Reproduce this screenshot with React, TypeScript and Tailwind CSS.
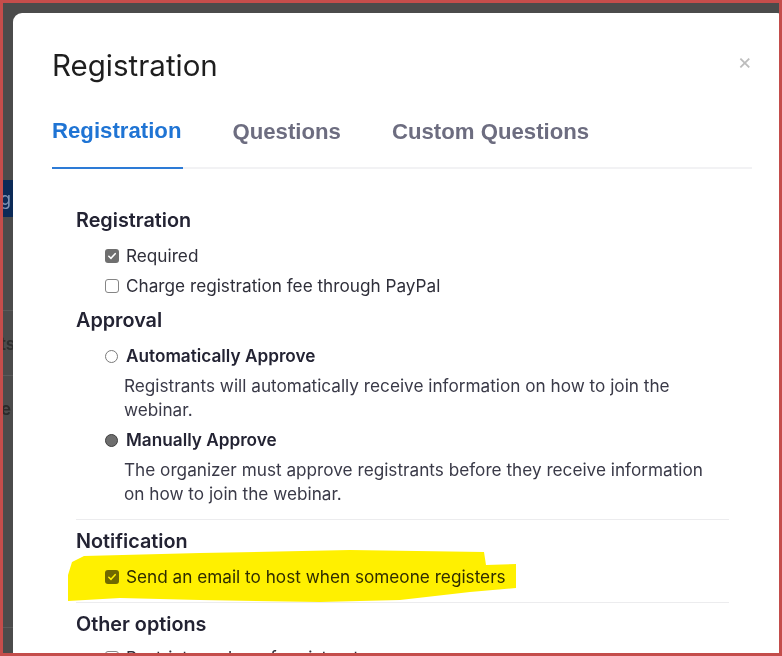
import React from 'react'

const font = { fontFamily: 'Inter, "Liberation Sans", sans-serif' }

const Checkbox = ({ checked }: { checked?: boolean }) =>
  checked ? (
    <span className="flex h-[14px] w-[14px] shrink-0 items-center justify-center rounded-[3px] bg-[#6f6f6f]">
      <svg viewBox="0 0 12 12" className="h-[10px] w-[10px]">
        <path d="M2.2 6.3 4.8 8.8 9.8 3.2" fill="none" stroke="#fff" strokeWidth="1.9" strokeLinecap="round" strokeLinejoin="round" />
      </svg>
    </span>
  ) : (
    <span className="h-[14px] w-[14px] shrink-0 rounded-[3px] border border-[#858585] bg-white" />
  )

const Radio = ({ checked }: { checked?: boolean }) =>
  checked ? (
    <span className="h-[13px] w-[13px] shrink-0 rounded-full border-[1.5px] border-[#3e3e3e] bg-[#6e6e6e]" />
  ) : (
    <span className="h-[13px] w-[13px] shrink-0 rounded-full border border-[#7a7a7a] bg-white" />
  )

const CheckRow = ({ checked, label }: { checked?: boolean; label: string }) => (
  <div className="flex h-[30px] items-center gap-[7px] pl-[29px] text-[17.2px] text-[#2f2f3a]">
    <Checkbox checked={checked} />
    <span>{label}</span>
  </div>
)

const RadioRow = ({ checked, label }: { checked?: boolean; label: string }) => (
  <div className="flex h-[34px] items-center gap-[8px] pl-[29px] text-[17.2px] font-semibold text-[#232333]">
    <Radio checked={checked} />
    <span>{label}</span>
  </div>
)

const SectionTitle = ({ children }: { children: React.ReactNode }) => (
  <div className="flex h-[36px] items-center text-[19.8px] font-semibold text-[#232333]">{children}</div>
)

export default function App() {
  return (
    <div className="relative h-[656px] w-[782px] overflow-hidden bg-[#4b4b4b]" style={font}>
      {/* page behind the overlay */}
      <div className="absolute left-0 top-[180px] flex h-[37px] w-[14px] items-center bg-[#0c2a57] text-[18px] text-[#7f93b5]">g</div>
      <div className="absolute left-0 top-[310px] h-px w-[14px] bg-[#5a5a5a]" />
      <div className="absolute left-0 top-[332px] text-[17px] font-semibold text-[#2e2e2e]">ts</div>
      <div className="absolute left-0 top-[375px] h-px w-[14px] bg-[#5a5a5a]" />
      <div className="absolute left-[1px] top-[397px] text-[17px] font-semibold text-[#2a2a2a]">e</div>
      <div className="absolute left-0 top-[627px] h-px w-[14px] bg-[#5a5a5a]" />

      {/* modal */}
      <div className="absolute left-[13px] top-[13px] h-[700px] w-[768px] rounded-tl-[9px] rounded-tr-[4px] bg-white">
        <div className="flex items-start justify-between pl-[39px] pr-[29px] pt-[33px]">
          <h1 className="text-[29.5px] leading-[38px] text-[#1e1e1e]">Registration</h1>
          <span className="text-[22px] leading-[30px] text-[#bdbdbd]">×</span>
        </div>

        <div className="ml-[39px] mt-[30px] flex w-[700px] border-b-2 border-[#f2f2f4]" style={{ fontFamily: '"Liberation Sans", Arial, sans-serif' }}>
          <div className="-mb-[2px] border-b-2 border-[#2d7bd6] pb-[20px] pr-[2px] text-[22.2px] font-bold text-[#1f74d4]">Registration</div>
          <div className="ml-[49px] pt-px text-[22.2px] font-bold text-[#6d6d80]">Questions</div>
          <div className="ml-[51px] pt-px text-[22.2px] font-bold text-[#6d6d80]">Custom Questions</div>
        </div>

        <div className="ml-[63px] mt-[34px] w-[653px]">
          <SectionTitle>Registration</SectionTitle>
          <div className="mt-[2px]">
            <CheckRow checked label="Required" />
            <CheckRow label="Charge registration fee through PayPal" />
          </div>
          <div className="mt-[2px]">
            <SectionTitle>Approval</SectionTitle>
          </div>

          <RadioRow label="Automatically Approve" />
          <p className="mt-px pl-[48px] pr-[8px] text-[17.2px] leading-[24px] text-[#3a3a48]">
            Registrants will automatically receive information on how to join the webinar.
          </p>
          <div className="mt-px">
            <RadioRow checked label="Manually Approve" />
          </div>
          <p className="mt-px pl-[48px] pr-[8px] text-[17.2px] leading-[24px] text-[#3a3a48]">
            The organizer must approve registrants before they receive information on how to join the webinar.
          </p>

          <div className="mt-[13px] h-px bg-[#ececee]" />
          <div className="mt-[4px]">
            <SectionTitle>Notification</SectionTitle>
          </div>
          <div className="mt-[2px]">
            <CheckRow checked label="Send an email to host when someone registers" />
          </div>
          <div className="mt-[10px] h-px bg-[#ececee]" />
          <div className="mt-[4px]">
            <SectionTitle>Other options</SectionTitle>
          </div>
          <CheckRow label="Restrict number of registrants" />
        </div>
      </div>

      {/* highlighter annotation */}
      <svg className="pointer-events-none absolute left-0 top-0 mix-blend-multiply" width="782" height="656" viewBox="0 0 782 656">
        <path
          d="M68 575 L72 562 L84 556 L200 553 L350 550 L484 552 L486 565 L516 564 L516 588 L470 592 L400 600 L320 602 L200 600 L120 598 L68 601 Z"
          fill="#fff000"
        />
      </svg>

      {/* screenshot frame */}
      <div className="pointer-events-none absolute inset-0 border-[3px] border-[#c44d4b]" />
    </div>
  )
}
